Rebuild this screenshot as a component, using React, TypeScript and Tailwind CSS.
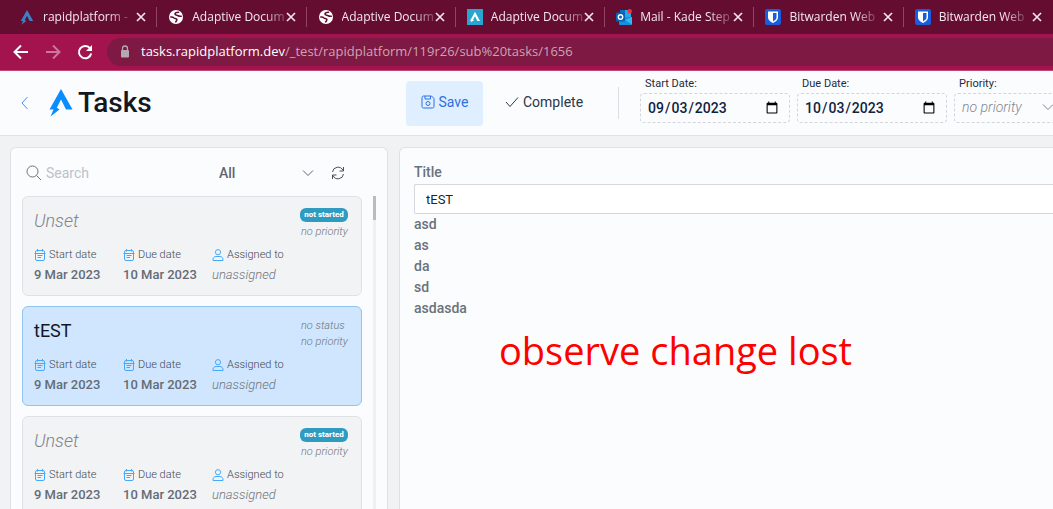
import { useId, useState } from "react";
import type { ReactNode } from "react";

function RapidMark({ className }: { className?: string }) {
  return (
    <svg viewBox="0 0 24 28" className={className} fill="currentColor" aria-hidden="true">
      <path d="M12 0 L23.500 20.500 H17 L12 10.500 L7.800 18.800 L10.500 20.500 L1.500 27.500 L4.500 20.500 H0.500 Z" />
    </svg>
  );
}

function GlobeIcon() {
  return (
    <svg viewBox="0 0 14 14" className="size-[14px]" aria-hidden="true">
      <circle cx="7" cy="7" r="7" fill="#fff" />
      <path
        d="M1.800 7c1.400-.2 2.400.2 3.200 1 .8.700 2.200.2 2.800 1.200.5 1-.4 1.700-1 2.600M9.500 2.300C8 2.400 6 2.600 6 4c0 1.300 2 1 3 1.600.9.500 1.600 1 3.200.6"
        fill="none"
        stroke="#5f0f33"
        strokeWidth="1.600"
        strokeLinecap="round"
      />
    </svg>
  );
}

function RapidTileIcon() {
  return (
    <svg viewBox="0 0 16 16" className="size-4" aria-hidden="true">
      <rect width="16" height="16" fill="#2aa5d2" />
      <path d="M8 2.800 13 12h-2.600L8 7.200 6 11h1.300L3.500 13.500 4.500 12H3z" fill="#fff" />
    </svg>
  );
}

function OutlookIcon() {
  return (
    <svg viewBox="0 0 16 16" className="size-4" aria-hidden="true">
      <rect x="4" y="1" width="11" height="9" fill="#28a8ea" />
      <rect x="4" y="1" width="5" height="5" fill="#0f6cbd" />
      <path d="M3 8h13v7a1 1 0 0 1-1 1H4a1 1 0 0 1-1-1z" fill="#1490df" />
      <path d="M16 8v7.500L9 11z" fill="#35b8f1" />
      <rect x="0" y="3.500" width="9" height="9" rx="1" fill="#0364b8" />
      <circle cx="4.500" cy="8" r="2.200" fill="none" stroke="#fff" strokeWidth="1.400" />
      <circle cx="13.700" cy="2.200" r="2.200" fill="#e03a3e" />
    </svg>
  );
}

function BitwardenIcon() {
  return (
    <svg viewBox="0 0 16 16" className="size-4" aria-hidden="true">
      <rect width="16" height="16" rx="2" fill="#175ddc" />
      <path d="M3 2.500h10v6c0 2.500-2.500 4.300-5 5.500-2.500-1.200-5-3-5-5.500z" fill="#fff" />
      <path d="M8 4h3.500v4.500c0 1.600-1.700 2.900-3.500 3.900z" fill="#175ddc" />
    </svg>
  );
}

function CloseIcon() {
  return (
    <svg viewBox="0 0 10 10" className="size-[10px]" stroke="#f3e6ec" strokeWidth="1.700" aria-hidden="true">
      <path d="M1 1l8 8M9 1L1 9" />
    </svg>
  );
}

function ChevronDown({ className }: { className?: string }) {
  return (
    <svg viewBox="0 0 12 12" className={className} fill="none" stroke="currentColor" aria-hidden="true">
      <path d="M1 3.500l5 5 5-5" />
    </svg>
  );
}

function CalendarIcon() {
  return (
    <svg viewBox="0 0 12 12" className="size-3 text-[#45a9fb]" fill="none" stroke="currentColor" aria-hidden="true">
      <rect x="1.500" y="1.500" width="9" height="10" rx="1.500" />
      <path d="M.5 4.500h11M3.500 0v2.500M8.500 0v2.500M3.500 6.500h5M3.500 8.500h3.500" />
    </svg>
  );
}

function PersonIcon() {
  return (
    <svg viewBox="0 0 12 12" className="size-3 text-[#45a9fb]" fill="none" stroke="currentColor" aria-hidden="true">
      <circle cx="6" cy="3.200" r="2.600" />
      <path d="M1 11.500c-.3-2.400 1-4 3-4h4c2 0 3.300 1.600 3 4z" />
    </svg>
  );
}

const tabs: { title: string; icon: ReactNode }[] = [
  { title: "rapidplatform -", icon: <RapidMark className="h-[15px] w-[14px] text-[#3b82c8]" /> },
  { title: "Adaptive Docum", icon: <GlobeIcon /> },
  { title: "Adaptive Docum", icon: <GlobeIcon /> },
  { title: "Adaptive Docum", icon: <RapidTileIcon /> },
  { title: "Mail - Kade Step", icon: <OutlookIcon /> },
  { title: "Bitwarden Web", icon: <BitwardenIcon /> },
  { title: "Bitwarden Web", icon: <BitwardenIcon /> },
];

function Browser() {
  return (
    <div className="shrink-0 border-b border-[#c0457a] bg-[#a3144f] font-['Open_Sans',sans-serif]">
      <div className="flex h-[34px] items-center overflow-hidden bg-[#650d31] pl-2">
        {tabs.map((tab, i) => (
          <div
            key={i}
            className="flex h-5 min-w-[149px] flex-1 items-center border-r border-[#944465] pr-[10px] pl-[11px] last:border-transparent"
          >
            <span className="flex w-4 shrink-0 justify-center">{tab.icon}</span>
            <span className="ml-2 shrink-0 text-xs whitespace-nowrap text-[#f4e8ee] [mask-image:linear-gradient(to_right,black_76%,rgba(0,0,0,0.25))]">
              {tab.title}
            </span>
            <button type="button" aria-label="Close tab" className="ml-auto shrink-0">
              <CloseIcon />
            </button>
          </div>
        ))}
      </div>
      <div className="flex h-9 items-center pl-3">
        <button type="button" aria-label="Back" className="w-8">
          <svg viewBox="0 0 18 16" className="h-4 w-[18px]" fill="none" stroke="#fff" strokeWidth="2" aria-hidden="true">
            <path d="M16 8H3M9 1.500L2.500 8 9 14.500" />
          </svg>
        </button>
        <button type="button" aria-label="Forward" className="w-8">
          <svg viewBox="0 0 18 16" className="h-4 w-[18px]" fill="none" stroke="#c9789a" strokeWidth="2" aria-hidden="true">
            <path d="M2 8h13M9 1.500L15.500 8 9 14.500" />
          </svg>
        </button>
        <button type="button" aria-label="Reload" className="w-[31px]">
          <svg viewBox="0 0 18 18" className="size-[18px]" fill="none" stroke="#fff" strokeWidth="2" aria-hidden="true">
            <path d="M14.200 5.500A6.200 6.200 0 1 0 15.200 10.500" />
            <path d="M16 2v6h-6z" fill="#fff" stroke="none" />
          </svg>
        </button>
        <div className="flex h-7 flex-1 items-center rounded-l-full bg-[#7d1943] pl-3">
          <svg viewBox="0 0 12 14" className="h-[14px] w-3" aria-hidden="true">
            <rect x="2" y="5" width="8" height="7.500" rx="1" fill="#b5a9b0" />
            <path d="M3.500 5.500V3.500a2.500 2.500 0 0 1 5 0v2" fill="none" stroke="#b5a9b0" strokeWidth="1.300" />
          </svg>
          <span className="ml-[10px] text-[13px] whitespace-nowrap text-[#cda3b4]">
            <span className="text-white">tasks.rapidplatform.dev</span>
            /_test/rapidplatform/119r26/sub%20tasks/1656
          </span>
        </div>
      </div>
    </div>
  );
}

function DateField({ label, initial }: { label: string; initial: string }) {
  const id = useId();
  const [value, setValue] = useState(initial);
  return (
    <div className="w-[150px] shrink-0">
      <label htmlFor={id} className="block pl-[5px] text-[11px] leading-4 text-[#1d2b3e]">
        {label}
      </label>
      <input
        id={id}
        type="date"
        value={value}
        onChange={(e) => setValue(e.target.value)}
        className="mt-px block h-[30px] w-full rounded border border-dashed border-[#d3d5d9] pr-2 pl-[6px] text-sm font-medium text-[#10233f]"
      />
    </div>
  );
}

function Header() {
  return (
    <header className="flex h-[65px] shrink-0 items-center overflow-hidden border-b border-[#dfe1e4] bg-[#fbfcfe]">
      <div className="flex w-[406px] shrink-0 items-center pl-5">
        <a href="#back" aria-label="Back to list" className="text-[#4b8ff5]">
          <svg viewBox="0 0 10 14" className="h-[14px] w-[10px]" fill="none" stroke="currentColor" aria-hidden="true">
            <path d="M7.500 1L2 7l5.500 6" />
          </svg>
        </a>
        <RapidMark className="ml-[19px] h-7 w-6 text-[#0a8dff]" />
        <h1 className="ml-[5px] text-[28px] leading-8 font-medium text-[#14181d]">Tasks</h1>
      </div>
      <button
        type="button"
        className="flex h-[45px] w-[77px] shrink-0 items-center justify-center gap-1 rounded bg-[#dfefff] pb-[2px] text-sm text-[#2f6fe0]"
      >
        <svg viewBox="0 0 14 14" className="size-[14px]" fill="none" stroke="currentColor" aria-hidden="true">
          <path d="M2.500 1h8L13 3.500v8a1.500 1.500 0 0 1-1.500 1.500h-9A1.500 1.500 0 0 1 1 11.500v-9A1.500 1.500 0 0 1 2.500 1z" />
          <path d="M4 1v3h5.500V1" />
          <circle cx="7" cy="8.500" r="2" />
        </svg>
        Save
      </button>
      <button type="button" className="ml-[22px] flex shrink-0 items-center gap-1 pb-[2px] text-sm text-[#28384a]">
        <svg viewBox="0 0 14 12" className="h-3 w-[14px]" fill="none" stroke="currentColor" aria-hidden="true">
          <path d="M1 6l4 4.500L13 1.500" />
        </svg>
        Complete
      </button>
      <div className="ml-[35px] h-8 w-px shrink-0 bg-[#dcdee2]" />
      <div className="ml-[21px] flex shrink-0 gap-[7px] pb-2">
        <DateField label="Start Date:" initial="2023-09-03" />
        <DateField label="Due Date:" initial="2023-10-03" />
        <div className="w-[120px] shrink-0">
          <label htmlFor="priority" className="block pl-[5px] text-[11px] leading-4 text-[#1d2b3e]">
            Priority:
          </label>
          <div className="relative mt-px">
            <select
              id="priority"
              className="block h-[30px] w-full appearance-none rounded border border-dashed border-[#d3d5d9] px-[7px] pb-[2px] text-sm font-light text-[#7f8790] italic"
            >
              <option>no priority</option>
              <option>low</option>
              <option>high</option>
            </select>
            <ChevronDown className="pointer-events-none absolute top-2 right-5 size-3 text-[#7f8790]" />
          </div>
        </div>
      </div>
    </header>
  );
}

type Task = { title: string | null; status: string | null; selected?: boolean };

const tasks: Task[] = [
  { title: null, status: "not started" },
  { title: "tEST", status: null, selected: true },
  { title: null, status: "not started" },
];

function Fact({ icon, label, children }: { icon: ReactNode; label: string; children: ReactNode }) {
  return (
    <div className="w-[89px] shrink-0 whitespace-nowrap">
      <dt className="flex h-4 items-center gap-[3px] text-[11px] leading-4 font-light text-[#3f474f]">
        {icon}
        {label}
      </dt>
      <dd className="mt-1 text-[13px] leading-4">{children}</dd>
    </div>
  );
}

function TaskCard({ task }: { task: Task }) {
  return (
    <li
      className={
        task.selected
          ? "h-[100px] shrink-0 rounded-md border border-[#8fc4f3] bg-[#cfe6fe] px-[11px] pt-[10px]"
          : "h-[100px] shrink-0 rounded-md border border-[#dfe1e4] bg-[#f2f3f5] px-[11px] pt-[10px]"
      }
    >
      <div className="flex h-9 justify-between">
        {task.title ? (
          <h2 className="text-lg leading-7 text-[#14181d]">{task.title}</h2>
        ) : (
          <h2 className="text-lg leading-7 font-light text-[#7d858d] italic">Unset</h2>
        )}
        <div className="mr-[2px] w-12 pt-px text-[11px] leading-4 font-light whitespace-nowrap text-[#6c757d] italic">
          {task.status ? (
            <div className="flex h-[14px] w-12 items-center justify-center rounded-md bg-[#2f9bc1] text-[8px] leading-none font-extrabold text-white not-italic">
              {task.status}
            </div>
          ) : (
            <div className="h-[14px] pl-px">no status</div>
          )}
          <div className="mt-[2px] pl-px">no priority</div>
        </div>
      </div>
      <dl className="flex pt-1">
        <Fact icon={<CalendarIcon />} label="Start date">
          <span className="font-medium text-[#646c75]">9 Mar 2023</span>
        </Fact>
        <Fact icon={<CalendarIcon />} label="Due date">
          <span className="font-medium text-[#646c75]">10 Mar 2023</span>
        </Fact>
        <Fact icon={<PersonIcon />} label="Assigned to">
          <span className="font-light text-[#6c757d] italic">unassigned</span>
        </Fact>
      </dl>
    </li>
  );
}

function TaskList() {
  return (
    <section className="flex w-[378px] shrink-0 flex-col overflow-hidden rounded-t-md border border-b-0 border-[#dfe1e4] bg-[#fbfcfe] px-[11px]">
      <div className="flex h-12 shrink-0 items-center pt-[2px] pl-1">
        <label htmlFor="search" className="text-[#76706f]">
          <span className="sr-only">Search tasks</span>
          <svg viewBox="0 0 16 16" className="size-4" fill="none" stroke="currentColor" aria-hidden="true">
            <circle cx="6.500" cy="6.500" r="5.500" />
            <path d="M10.500 10.500L15 15" />
          </svg>
        </label>
        <input
          id="search"
          type="search"
          placeholder="Search"
          className="ml-1 w-[173px] text-sm outline-none placeholder:text-[#bcc2c9]"
        />
        <div className="relative w-[95px]">
          <select aria-label="Filter" className="w-full appearance-none text-sm font-medium text-[#5f6770]">
            <option>All</option>
            <option>Mine</option>
          </select>
          <ChevronDown className="pointer-events-none absolute top-[6px] right-0 size-3 text-[#5f6770]" />
        </div>
        <button type="button" aria-label="Refresh" className="ml-[17px] text-[#4a5159]">
          <svg viewBox="0 0 14 14" className="size-[14px]" fill="none" stroke="currentColor" aria-hidden="true">
            <path d="M1.500 6A5.500 5.500 0 0 1 12 4.500M12.500 8A5.500 5.500 0 0 1 2 9.500" />
            <path d="M12.500 1v4h-4M1.500 13V9h4" />
          </svg>
        </button>
      </div>
      <div className="flex min-h-0 flex-1">
        <ul className="flex w-[340px] flex-col gap-[10px] overflow-hidden">
          {tasks.map((task, i) => (
            <TaskCard key={i} task={task} />
          ))}
        </ul>
        <div className="ml-auto w-[3px] bg-[#f0f0f0]">
          <div className="h-6 bg-[#bcbcbc]" />
        </div>
      </div>
    </section>
  );
}

function TaskEditor() {
  const [title, setTitle] = useState("tEST");
  return (
    <section className="min-w-0 flex-1 rounded-tl-md border-t border-l border-[#dfe1e4] bg-[#fbfcfe] pt-[14px] pl-[14px] text-sm leading-[21px] font-medium text-[#6a727a]">
      <label htmlFor="title" className="block">
        Title
      </label>
      <input
        id="title"
        value={title}
        onChange={(e) => setTitle(e.target.value)}
        className="mt-px block h-[30px] w-full rounded-l-xs border border-r-0 border-[#d5d7da] bg-white px-[11px] text-[13px] font-normal text-[#212529]"
      />
      <div>
        <p>asd</p>
        <p>as</p>
        <p>da</p>
        <p>sd</p>
        <p>asdasda</p>
      </div>
      <p className="mt-1 pl-[85px] font-['Open_Sans',sans-serif] text-[38px] leading-[54px] font-normal text-[#ff0000]">
        observe change lost
      </p>
    </section>
  );
}

export default function App() {
  return (
    <div className="flex h-screen flex-col overflow-hidden bg-[#f1f2f4] font-[Roboto,sans-serif]">
      <Browser />
      <Header />
      <main className="flex min-h-0 flex-1 gap-[11px] pt-[11px] pl-[10px]">
        <TaskList />
        <TaskEditor />
      </main>
    </div>
  );
}
